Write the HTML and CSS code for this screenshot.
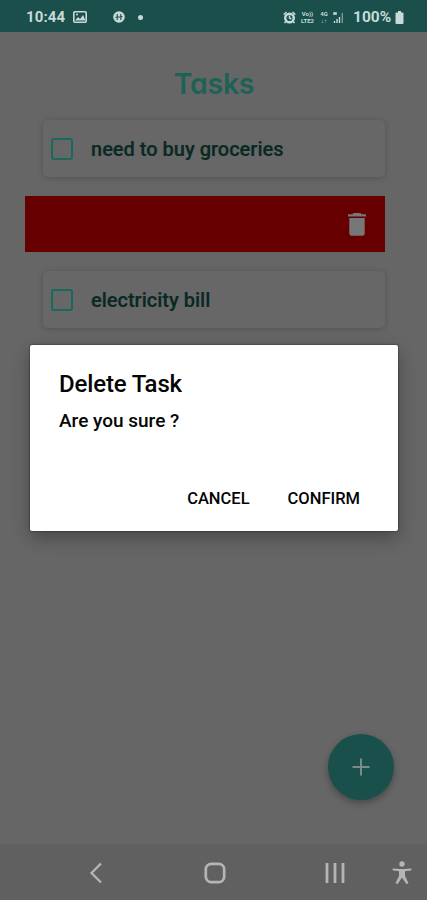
FILE: index.html
```html
<!DOCTYPE html>
<html lang="en">
<head>
<meta charset="utf-8">
<title>Tasks</title>
<link rel="stylesheet" href="styles.css">
</head>
<body>
<div class="screen">
  <header class="status">
    <span class="time">10:44</span>
    <svg class="picture" width="14" height="12" viewBox="0 0 14 12"><rect x=".8" y=".8" width="12.4" height="10.4" rx="1" fill="none" stroke="currentColor" stroke-width="1.6"/><path d="M2 9.500 5 6l2 2 3-4 2.500 5.500z" fill="currentColor"/><circle cx="4" cy="3.600" r="1" fill="currentColor"/></svg>
    <svg class="sync" width="12" height="12" viewBox="0 0 12 12"><circle cx="6" cy="6" r="5.800" fill="currentColor"/><path d="M4.200 3v6M7.800 3v6M2.500 6.500 9.500 5.500" stroke="#1a4f4b" stroke-width="1.100"/></svg>
    <span class="dot"></span>
    <div class="status-right">
      <svg width="13" height="13" viewBox="0 0 13 13"><circle cx="6.500" cy="7" r="4.300" fill="none" stroke="currentColor" stroke-width="2.400"/><path d="M.7 3.500 3.500 1M12.300 3.500 9.500 1M2.800 10.500 1.500 12M10.200 10.500l1.300 1.500M6.500 4.500V7l1.800 1" fill="none" stroke="currentColor" stroke-width="1.500"/></svg>
      <span class="tiny volte">Vo))<br>LTE2</span>
      <span class="tiny net">4G<br>↓↑</span>
      <svg class="signal" width="11" height="13" viewBox="0 0 11 13"><path d="M1 1v3M3 1v3M1 2.500h2M1.500 12v-2M4 12V8M6.500 12V6" stroke="currentColor" stroke-width="1.400"/><path d="M9.300 12V2" stroke="currentColor" stroke-width="1.400" opacity=".55"/></svg>
      <span class="percent">100%</span>
      <svg class="battery" width="9" height="13" viewBox="0 0 9 13"><path d="M3 0h3v1.500h1.500q1 0 1 1V12q0 1-1 1h-6q-1 0-1-1V2.500q0-1 1-1H3z" fill="currentColor"/></svg>
    </div>
  </header>
  <main>
    <h1>Tasks</h1>
    <div class="task"><span class="box"></span><span class="label">need to buy groceries</span></div>
    <div class="swiped"><svg width="18" height="23" viewBox="0 0 18 23"><path d="M5.500 0h7l1 1.200H18v2.300H0V1.200h4.500zM1.300 5h15.400v15.500q0 2.300-2.300 2.300H3.600q-2.300 0-2.300-2.300z" fill="currentColor"/></svg></div>
    <div class="task"><span class="box"></span><span class="label">electricity bill</span></div>
    <button class="add" aria-label="Add task"><svg width="18" height="18" viewBox="0 0 18 18"><path d="M9 .5v17M.5 9h17" stroke="currentColor" stroke-width="2"/></svg></button>
  </main>
  <nav>
    <svg class="back" width="14" height="22" viewBox="0 0 14 22"><path d="M12 1.500 2.500 11l9.500 9.500" fill="none" stroke="currentColor" stroke-width="2.300"/></svg>
    <svg class="home" width="22" height="22" viewBox="0 0 22 22"><rect x="1.800" y="1.800" width="18.400" height="18.400" rx="5.500" fill="none" stroke="currentColor" stroke-width="2.700"/></svg>
    <svg class="recents" width="20" height="20" viewBox="0 0 20 20"><path d="M2 0v20M10 0v20M18 0v20" stroke="currentColor" stroke-width="2.800"/></svg>
    <svg class="access" width="20" height="24" viewBox="0 0 20 24"><circle cx="10" cy="3" r="2.700" fill="currentColor"/><path d="M1.500 8.500 7.500 9.200h5l6-.7" fill="none" stroke="currentColor" stroke-width="2.200" stroke-linecap="round"/><path d="M7 8.500h6v6.500l3.500 7-2 1.200L10 16.500l-4.500 6.700-2-1.200L7 15z" fill="currentColor"/></svg>
  </nav>
  <section class="dialog" role="dialog">
    <h2>Delete Task</h2>
    <p>Are you sure ?</p>
    <div class="actions"><button class="cancel">CANCEL</button><button class="confirm">CONFIRM</button></div>
  </section>
</div>
</body>
</html>
```
FILE: styles.css
```css
* { box-sizing: border-box; }
body { margin: 0; font-family: Roboto, "Liberation Sans", sans-serif; }
svg { display: block; flex: none; }
button { border: 0; padding: 0; background: none; font: inherit; color: inherit; }
.screen { position: relative; width: 427px; height: 900px; display: flex; flex-direction: column; background: #666; overflow: hidden; }
.status { height: 32px; flex: none; display: flex; align-items: center; padding: 2px 23px 0 26px; background: #1a4f4b; color: #c6dad8; }
.time { width: 41px; font-size: 15px; font-weight: 700; letter-spacing: .1px; }
.picture { margin-left: 6px; }
.sync { margin-left: 26px; }
.dot { width: 5px; height: 5px; margin-left: 13px; border-radius: 50%; background: currentColor; }
.status-right { margin-left: auto; display: flex; align-items: center; }
.tiny { font-size: 6px; line-height: 7px; font-weight: 700; text-align: center; }
.volte { width: 17px; margin-left: 3px; }
.net { width: 10px; margin-left: 3px; }
.signal { margin-left: 4px; }
.percent { width: 39px; margin-left: 9px; font-size: 15.500px; font-weight: 700; }
.battery { margin-left: 3px; }
main { flex: 1; display: flex; flex-direction: column; padding: 0 42px 44px 43px; }
h1 { margin: 33px 0 0; height: 55px; line-height: 38px; text-align: center; font-family: Inter, sans-serif; font-feature-settings: "cv11"; font-size: 28.500px; font-weight: 600; letter-spacing: -.3px; color: #1d6255; }
.task { height: 57px; flex: none; display: flex; align-items: center; padding-left: 8px; border-radius: 5px; background: #676767; box-shadow: 0 1px 6px rgba(0,0,0,.2); }
.box { width: 22px; height: 22px; border: 2px solid #1b685f; border-radius: 3px; }
.label { margin-left: 18px; font-size: 20px; font-weight: 500; color: #092925; white-space: nowrap; -webkit-text-stroke: .2px; }
.swiped { height: 56px; flex: none; display: flex; align-items: center; justify-content: flex-end; margin: 19px 0 19px -18px; padding-right: 19px; background: #600; color: #777; }
.add { width: 66px; height: 66px; margin: auto -9px 0 auto; display: grid; place-items: center; border-radius: 50%; background: #1a504b; color: #7b8b89; box-shadow: 0 3px 7px rgba(0,0,0,.3); }
nav { height: 56px; flex: none; display: flex; align-items: center; padding: 2px 0 0 89px; background: #606060; color: #b5b5b5; }
.home { margin-left: 101px; }
.recents { margin-left: 99px; }
.access { margin-left: 47px; }
.dialog { position: absolute; left: 30px; top: 345px; width: 368px; height: 186px; padding: 24px 38px 20px 29px; display: flex; flex-direction: column; background: #fff; color: #050505; border-radius: 2px; box-shadow: 0 0 2px rgba(0,0,0,.7), 0 7px 18px rgba(0,0,0,.3); }
h2 { margin: 0; font-size: 24px; line-height: 30px; font-weight: 500; letter-spacing: -.15px; }
p { margin: 10px 0 0; font-size: 19px; line-height: 24px; font-weight: 500; }
.actions { display: flex; justify-content: flex-end; gap: 38px; margin-top: auto; font-size: 16.500px; line-height: 24px; font-weight: 500; }
```
